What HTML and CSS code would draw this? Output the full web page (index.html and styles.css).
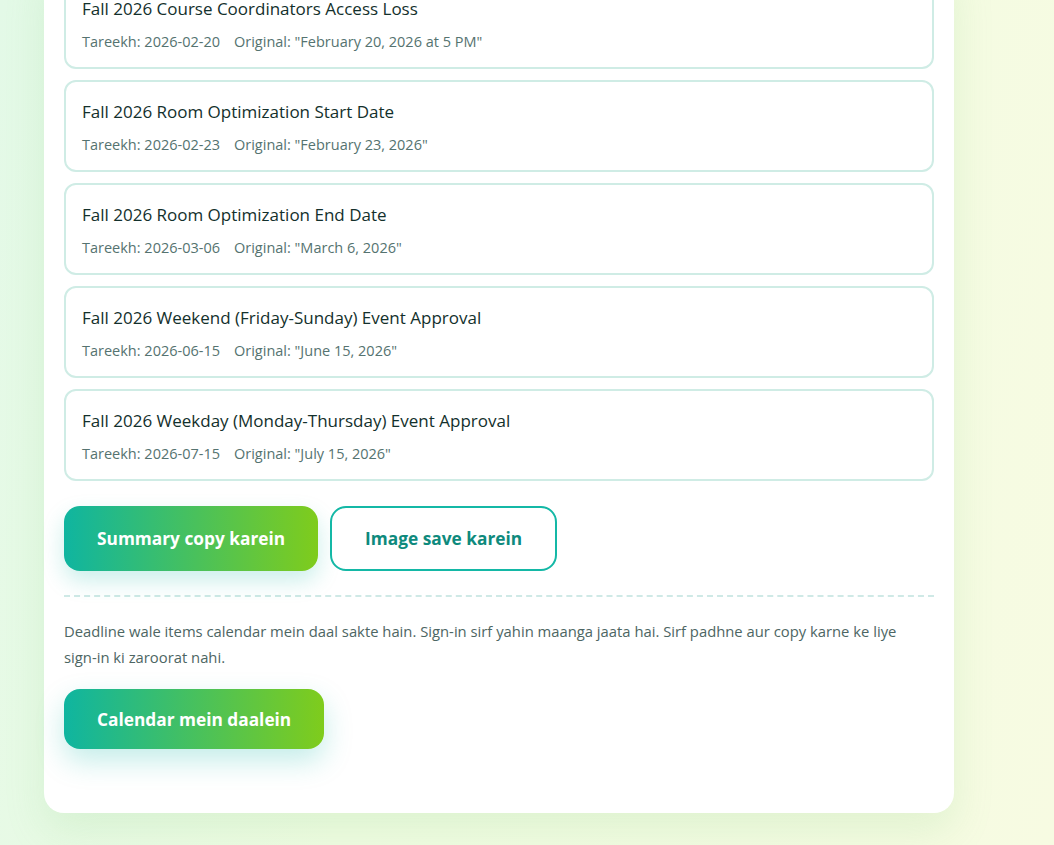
FILE: index.html
```
<!DOCTYPE html>
<html lang="en">
<head>
    <meta charset="UTF-8">
    <meta name="viewport" content="width=device-width, initial-scale=1.0">
    <title>Deadlines | Summary</title>
    <link rel="stylesheet" href="styles.css">
</head>
<body>
    <main class="panel">
        <ul class="deadline-list">
            <li class="deadline-item">
                <h3>Fall 2026 Course Coordinators Access Loss</h3>
                <div class="deadline-meta">
                    <span>Tareekh: 2026-02-20</span>
                    <span>Original: "February 20, 2026 at 5 PM"</span>
                </div>
            </li>
            <li class="deadline-item">
                <h3>Fall 2026 Room Optimization Start Date</h3>
                <div class="deadline-meta">
                    <span>Tareekh: 2026-02-23</span>
                    <span>Original: "February 23, 2026"</span>
                </div>
            </li>
            <li class="deadline-item">
                <h3>Fall 2026 Room Optimization End Date</h3>
                <div class="deadline-meta">
                    <span>Tareekh: 2026-03-06</span>
                    <span>Original: "March 6, 2026"</span>
                </div>
            </li>
            <li class="deadline-item">
                <h3>Fall 2026 Weekend (Friday-Sunday) Event Approval</h3>
                <div class="deadline-meta">
                    <span>Tareekh: 2026-06-15</span>
                    <span>Original: "June 15, 2026"</span>
                </div>
            </li>
            <li class="deadline-item">
                <h3>Fall 2026 Weekday (Monday-Thursday) Event Approval</h3>
                <div class="deadline-meta">
                    <span>Tareekh: 2026-07-15</span>
                    <span>Original: "July 15, 2026"</span>
                </div>
            </li>
        </ul>

        <div class="actions">
            <button class="btn btn-primary">Summary copy karein</button>
            <button class="btn btn-outline">Image save karein</button>
        </div>

        <div class="calendar-section">
            <p class="note">Deadline wale items calendar mein daal sakte hain. <span class="nowrap">Sign-in</span> sirf yahin maanga jaata hai. Sirf padhne aur copy karne ke liye <span class="nowrap">sign-in</span> ki zaroorat nahi.</p>
            <button class="btn btn-primary btn-calendar">Calendar mein daalein</button>
        </div>
    </main>
</body>
</html>
```

FILE: styles.css
```
/* Global Styles */
* {
    margin: 0;
    padding: 0;
    box-sizing: border-box;
    font-family: 'Open Sans', 'Noto Sans', sans-serif;
}

html, body {
    height: 100%;
}

body {
    background: linear-gradient(100deg, #e3f9e7 0%, #f0fce2 40%, #f7fbe2 100%);
    color: #12332e;
    overflow: hidden;
}

.nowrap {
    white-space: nowrap;
}

/* Main panel */
.panel {
    width: 910px;
    margin: -43px 0 0 44px;
    padding: 20px 20px 64px;
    background-color: #fff;
    border-radius: 20px;
    box-shadow: 0 18px 40px rgba(120, 200, 120, 0.16);
}

/* Deadline list */
.deadline-list {
    list-style: none;
    display: flex;
    flex-direction: column;
    gap: 11px;
}

.deadline-item {
    border: 2px solid #cfece5;
    border-radius: 12px;
    padding: 18px 16px 15px;
}

.deadline-item h3 {
    font-size: 17px;
    font-weight: 400;
    line-height: 24px;
    color: #13302c;
}

.deadline-meta {
    display: flex;
    gap: 14px;
    margin-top: 10px;
    font-size: 14.5px;
    line-height: 21px;
    color: #557370;
}

/* Buttons */
.actions {
    display: flex;
    gap: 12px;
    margin-top: 25px;
    padding-bottom: 24px;
    border-bottom: 2px dashed #cfe9e6;
}

.btn {
    height: 65px;
    padding: 0 33px;
    border-radius: 16px;
    font-size: 17.3px;
    font-weight: 700;
    cursor: pointer;
}

.btn-primary {
    border: none;
    color: #fff;
    background: linear-gradient(90deg, #0fb5a0 0%, #7fcc1c 100%);
    box-shadow: 0 10px 22px rgba(20, 184, 166, 0.22);
}

.btn-outline {
    background-color: #fff;
    border: 2px solid #14b8a6;
    color: #0e8a7d;
}

/* Calendar */
.calendar-section {
    padding-top: 21px;
}

.note {
    font-size: 14.8px;
    line-height: 26px;
    color: #4d6663;
}

.btn-calendar {
    height: 60px;
    margin-top: 19px;
    box-shadow: 0 12px 28px rgba(20, 184, 166, 0.25);
}
```
